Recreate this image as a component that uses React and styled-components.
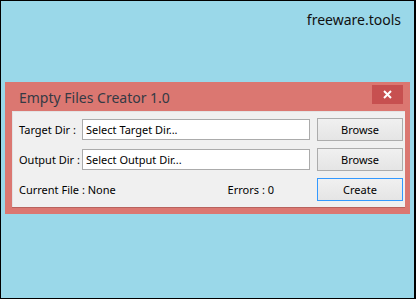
import React from "react";
import styled, { createGlobalStyle } from "styled-components";

const GlobalStyle = createGlobalStyle`
  html, body {
    margin: 0;
    padding: 0;
  }
  body {
    font-family: "Noto Sans", "Open Sans", sans-serif;
  }
  * {
    box-sizing: border-box;
  }
`;

const Page = styled.div`
  width: 416px;
  height: 299px;
  background: #9ad8e9;
  border: 1px solid #000;
  border-right-width: 2px;
  padding: 0 4px 0 4px;
  display: flex;
  flex-direction: column;
`;

const Brand = styled.div`
  align-self: flex-end;
  margin: 9px 9px 0 0;
  font-size: 14px;
  line-height: 19px;
  color: #111;
`;

const Window = styled.div`
  margin-top: 53px;
  width: 405px;
  background: #db7771;
  display: flex;
  flex-direction: column;
`;

const TitleBar = styled.div`
  height: 29px;
  display: flex;
  align-items: center;
  justify-content: space-between;
  padding: 0 7px 0 14px;
`;

const Title = styled.span`
  font-size: 14px;
  color: #343a44;
  padding-top: 1px;
`;

const Close = styled.div`
  width: 31px;
  height: 19px;
  margin-top: -4px;
  background: #c75050;
  display: flex;
  align-items: center;
  justify-content: center;
`;

const Panel = styled.div`
  margin: 0 5px 7px 7px;
  background: #f0f0f0;
  box-shadow: 0 1px 0 #b8625d, inset 1px 1px 0 #e3e3e3;
  padding: 7px 2px 6px 7px;
  display: grid;
  grid-template-columns: 56px 228px 86px;
  column-gap: 7px;
  row-gap: 7px;
  align-items: center;
`;

const Label = styled.span`
  font-size: 11px;
  color: #000;
  white-space: nowrap;
`;

const Field = styled.input`
  height: 21px;
  width: 228px;
  border: 1px solid #ababab;
  background: #fff;
  padding: 0 3px;
  font-family: inherit;
  font-size: 11px;
  color: #000;
  outline: none;
`;

const Button = styled.button`
  height: 23px;
  width: 86px;
  border: 1px solid ${(p) => (p.focused ? "#3399ff" : "#acacac")};
  background: linear-gradient(#f0f0f0, #e5e5e5);
  font-family: inherit;
  font-size: 11px;
  color: #000;
  padding: 0;
`;

const Status = styled.div`
  grid-column: 1 / span 2;
  display: flex;
  justify-content: space-between;
  padding-right: 36px;
  font-size: 11px;
  color: #000;
`;

export default function App() {
  return (
    <>
      <GlobalStyle />
      <Page>
        <Brand>freeware.tools</Brand>
        <Window>
          <TitleBar>
            <Title>Empty Files Creator 1.0</Title>
            <Close>
              <svg width="9" height="9" viewBox="0 0 9 9">
                <path d="M1 1L8 8M8 1L1 8" stroke="#fff" strokeWidth="2" />
              </svg>
            </Close>
          </TitleBar>
          <Panel>
            <Label>Target Dir :</Label>
            <Field defaultValue="Select Target Dir..." />
            <Button>Browse</Button>
            <Label>Output Dir :</Label>
            <Field defaultValue="Select Output Dir..." />
            <Button>Browse</Button>
            <Status>
              <span>Current File : None</span>
              <span>Errors : 0</span>
            </Status>
            <Button focused>Create</Button>
          </Panel>
        </Window>
      </Page>
    </>
  );
}
